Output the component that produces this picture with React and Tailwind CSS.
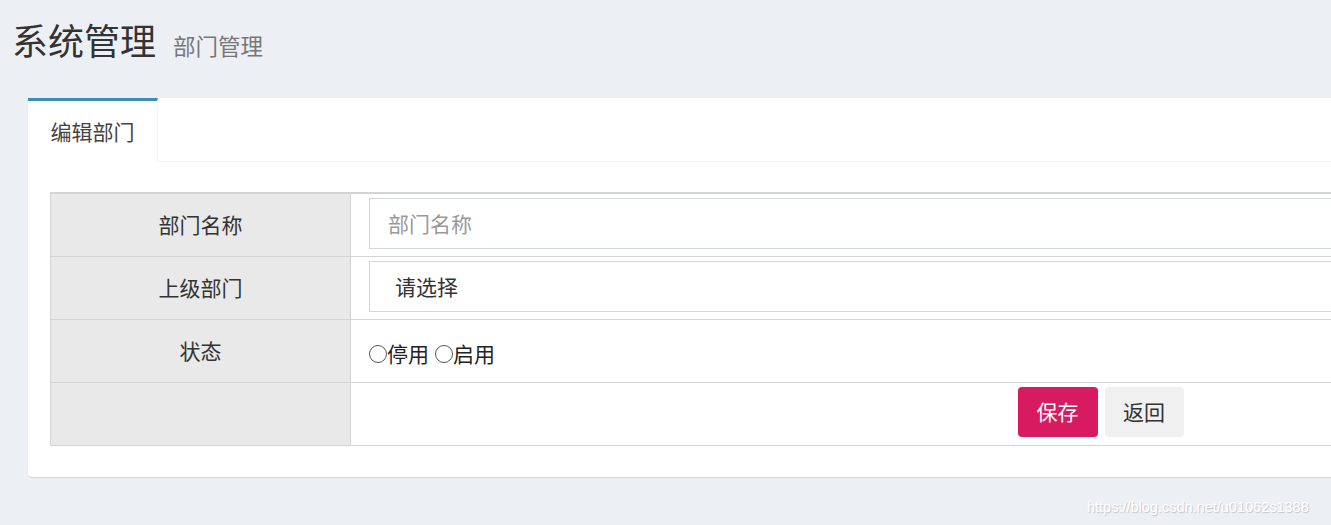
const font = { fontFamily: '"Noto Sans CJK SC", "Noto Sans", sans-serif' };

function Radio({ label }) {
  return (
    <label className="flex items-center">
      <span className="inline-block h-[18px] w-[18px] rounded-full border border-[#555] bg-white" />
      <span>{label}</span>
    </label>
  );
}

function Row({ label, children, cellClass = "" }) {
  return (
    <div className="flex h-[63px] border-b border-[#d4d4d4]">
      <div className="flex w-[300px] shrink-0 items-center justify-center border-r border-[#d4d4d4] bg-[#e9e9e9] text-[21px] text-[#333]">
        {label}
      </div>
      <div className={`flex-1 ${cellClass}`}>{children}</div>
    </div>
  );
}

export default function App() {
  return (
    <div className="h-[525px] w-[1331px] overflow-hidden bg-[#ecf0f5] text-[#333]" style={font}>
      <div className="flex items-baseline pl-[12px] pt-[20px]">
        <h1 className="text-[36px] leading-[1.1] text-[#333]">系统管理</h1>
        <span className="ml-[17px] text-[22.5px] text-[#777]">部门管理</span>
      </div>

      <div className="ml-[28px] mt-[35px] w-[1872px] rounded-[4px] bg-white shadow-[0_1px_1px_rgba(0,0,0,0.12)]">
        <div className="flex border-b border-[#f4f4f4]">
          <div className="-mb-px flex h-[64px] w-[130px] items-center justify-center border-t-[3px] border-r border-t-[#3c8dbc] border-r-[#f4f4f4] bg-white text-[21px] text-[#444]">
            编辑部门
          </div>
        </div>

        <div className="px-[22px] pb-[31px] pt-[30px]">
          <div className="w-[1800px] border-l border-t-2 border-[#d4d4d4]">
            <Row label="部门名称" cellClass="px-[18px] pt-[4px]">
              <div className="flex h-[51px] items-center border border-[#d2d6de] px-[18px] text-[21px] text-[#999]">
                部门名称
              </div>
            </Row>
            <Row label="上级部门" cellClass="px-[18px] pt-[4px]">
              <div className="flex h-[51px] items-center border border-[#d2d6de] px-[25px] text-[21px] text-[#333]">
                请选择
              </div>
            </Row>
            <Row label="状态" cellClass="flex items-center gap-[6px] px-[18px] pt-[6px] text-[21px] text-[#222]">
              <Radio label="停用" />
              <Radio label="启用" />
            </Row>
            <Row label="" cellClass="flex justify-center gap-[7px] pt-[4px]">
              <button className="h-[50px] w-[80px] rounded-[4px] bg-[#d81b60] text-[21px] text-white">保存</button>
              <button className="h-[50px] w-[79px] rounded-[4px] bg-[#f0f0f0] text-[21px] text-[#333]">返回</button>
            </Row>
          </div>
        </div>
      </div>

      <div
        className="mt-[20px] ml-[1087px] whitespace-nowrap text-[14.5px] text-white [text-shadow:1px_1px_1px_rgba(0,0,0,0.18)]"
        style={{ fontFamily: '"Liberation Sans", sans-serif' }}
      >
        https://blog.csdn.net/u01062s1388
      </div>
    </div>
  );
}
